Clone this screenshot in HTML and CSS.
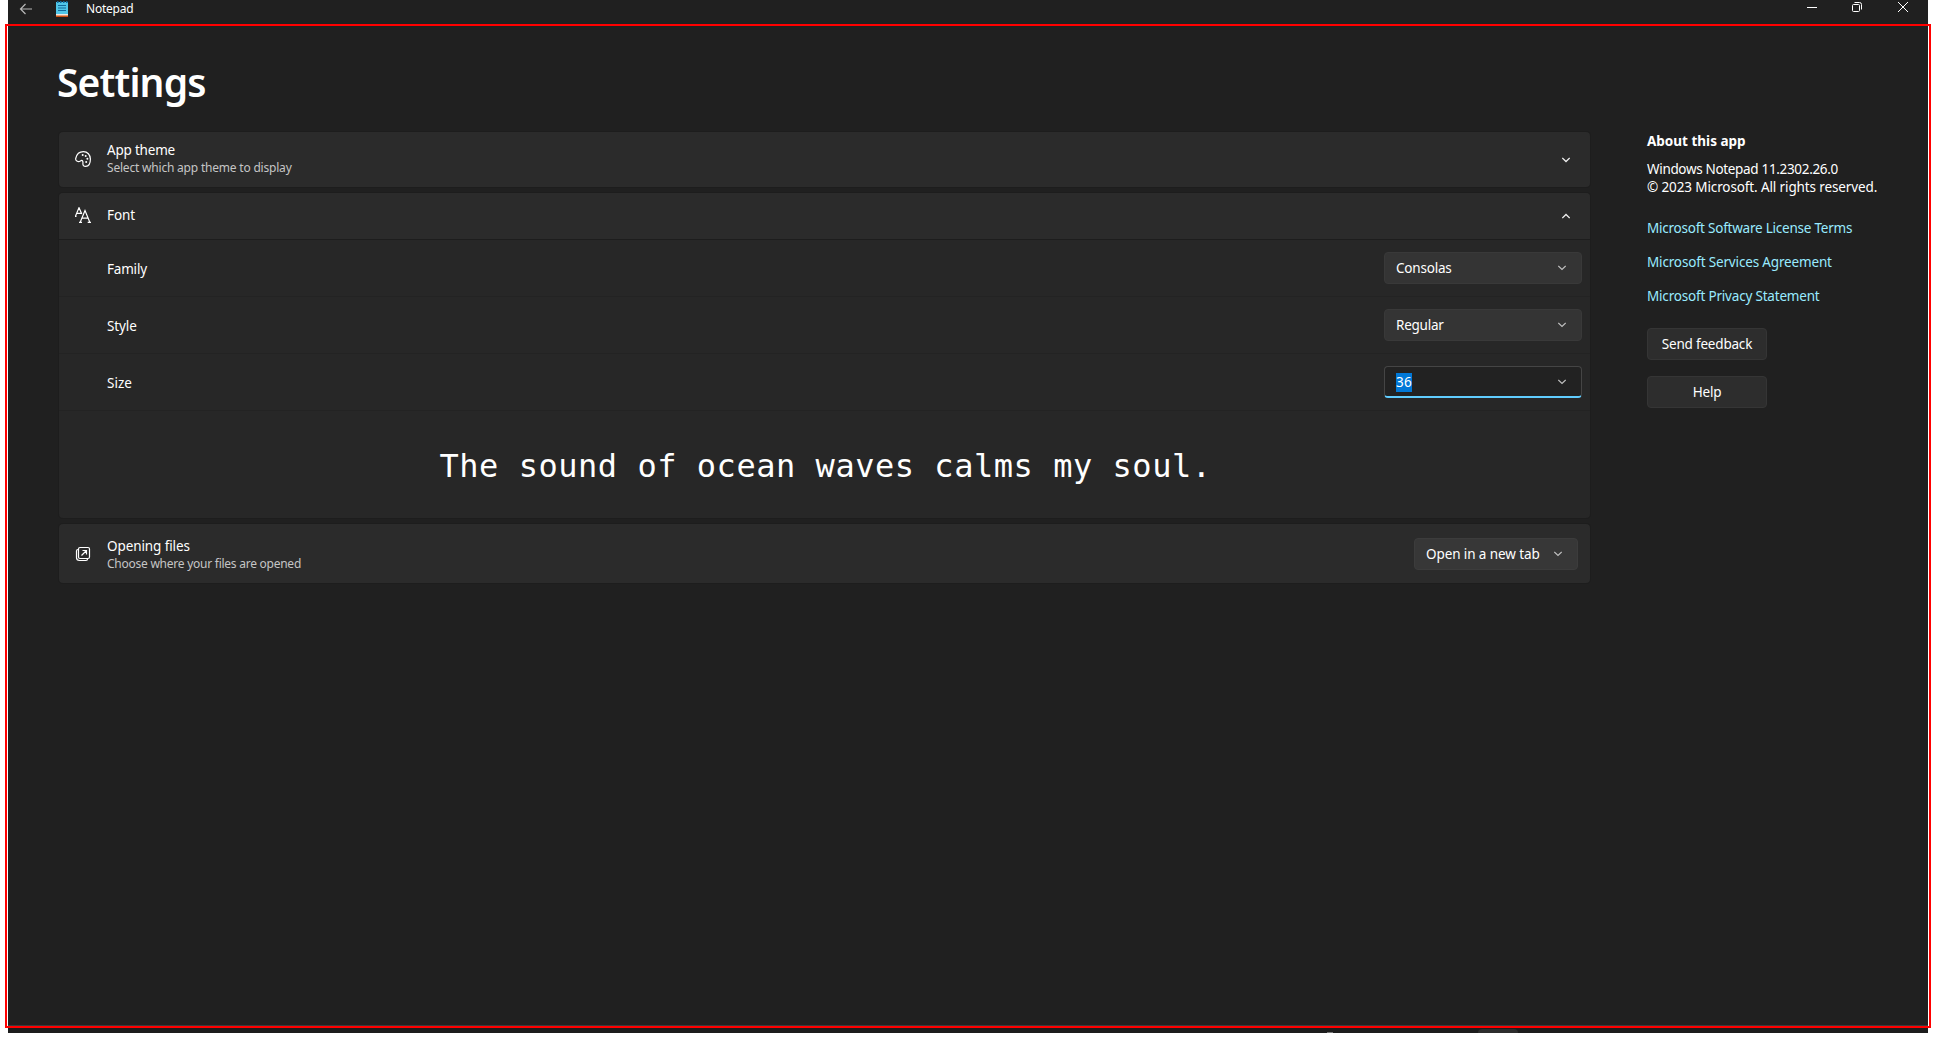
FILE: index.html
```html
<!DOCTYPE html>
<html lang="en">
<head>
<meta charset="utf-8">
<title>Notepad</title>
<link rel="stylesheet" href="styles.css">
</head>
<body>
<div class="window">
  <header class="titlebar">
    <svg class="back" width="14" height="14" viewBox="0 0 14 14"><path d="M13 7H1.500M6.500 2 1.500 7l5 5"/></svg>
    <svg class="logo" width="12" height="18" viewBox="0 0 12 18"><path fill="#ca5010" d="M0 14h12v3H0z"/><path fill="#f3e9e0" d="M0 13h12v2.500H0z"/><path fill="#50c6e8" d="M0 2h12v12H0z"/><path fill="#126a9c" d="M1 1h1.500v2H1zM4 1h1.500v2H4zM7 1h1.500v2H7zM10 1h1.500v2H10zM2 5h8v1H2zM2 7.500h8v1H2zM2 10h8v1H2z"/></svg>
    <span class="app-name">Notepad</span>
    <div class="caption">
      <svg width="10" height="14" viewBox="0 0 10 14"><path d="M0 7.500h10"/></svg>
      <svg width="10" height="14" viewBox="0 0 10 14"><rect x=".5" y="4.500" width="7" height="7" rx="1"/><path d="M2.500 2.500h5a2 2 0 0 1 2 2v5"/></svg>
      <svg class="close" width="10" height="14" viewBox="0 0 10 14"><path d="m0 2 10 10M10 2 0 12"/></svg>
    </div>
  </header>
  <main class="page">
    <section class="settings">
      <h1>Settings</h1>
      <div class="card theme">
        <svg class="icon" width="16" height="16" viewBox="0 0 16 16"><path d="M.7 7.500C1.600 3.300 4.500.6 8.400.6c4 0 7 3.200 7 7.500 0 4.500-2 7.300-4.700 7.300-2.100 0-3-1.300-2.800-3.200.2-1.700-.2-2.800-1.300-2.800-1 0-1.500 1.200-3.100 1.200C1.700 10.600.4 9.200.7 7.500z"/><g class="dots"><circle cx="7.700" cy="4" r="1"/><circle cx="10.700" cy="5" r="1"/><circle cx="12.400" cy="7.800" r="1"/><circle cx="11.200" cy="10.900" r="1"/></g></svg>
        <div class="label"><span class="name t-theme">App theme</span><span class="desc t-select">Select which app theme to display</span></div>
        <svg class="chevron" width="8" height="6" viewBox="0 0 8 6"><path d="m.3 1 3.700 3.500L7.700 1"/></svg>
      </div>
      <div class="group">
        <div class="row head">
          <svg class="icon" width="16" height="16" viewBox="0 0 16 16"><path d="M.5 9 4 .7 6.800 7M1.800 6.300H6M0 9.300h1.500M5.300 15 10 3.500 14.700 15M6.800 11.200h6.400M4 15.300h3M12.700 15.300H16"/></svg>
          <span class="name t-font">Font</span>
          <svg class="chevron" width="8" height="6" viewBox="0 0 8 6"><path d="M.3 5 4 1.500 7.700 5"/></svg>
        </div>
        <div class="row sub"><span class="name t-family">Family</span><div class="combo"><span class="t-consolas">Consolas</span><svg class="chevron dim" width="8" height="6" viewBox="0 0 8 6"><path d="m.3 1 3.700 3.500L7.700 1"/></svg></div></div>
        <div class="row sub"><span class="name t-style">Style</span><div class="combo"><span class="t-regular">Regular</span><svg class="chevron dim" width="8" height="6" viewBox="0 0 8 6"><path d="m.3 1 3.700 3.500L7.700 1"/></svg></div></div>
        <div class="row sub"><span class="name t-size">Size</span><div class="combo edit"><span class="selected">36</span><svg class="chevron dim" width="8" height="6" viewBox="0 0 8 6"><path d="m.3 1 3.700 3.500L7.700 1"/></svg></div></div>
        <div class="preview">The sound of ocean waves calms my soul.</div>
      </div>
      <div class="card files">
        <svg class="icon" width="16" height="16" viewBox="0 0 16 16"><rect x="3.500" y="1.500" width="11" height="11" rx="1.500"/><path d="M3 3.500c-1 0-1.500.6-1.500 1.500v6.500a3 3 0 0 0 3 3H11c.9 0 1.500-.5 1.500-1.500M6.500 9.500l5-5M7.500 4.500h4v4"/></svg>
        <div class="label"><span class="name t-opening">Opening files</span><span class="desc t-choose">Choose where your files are opened</span></div>
        <div class="combo tab"><span class="t-tab">Open in a new tab</span><svg class="chevron dim" width="8" height="6" viewBox="0 0 8 6"><path d="m.3 1 3.700 3.500L7.700 1"/></svg></div>
      </div>
    </section>
    <aside class="about">
      <h2>About this app</h2>
      <p><span class="t-version">Windows Notepad 11.2302.26.0</span><br><span class="t-rights">© 2023 Microsoft. All rights reserved.</span></p>
      <nav><a class="t-license">Microsoft Software License Terms</a><a class="t-services">Microsoft Services Agreement</a><a class="t-privacy">Microsoft Privacy Statement</a></nav>
      <button><span class="t-send">Send feedback</span></button>
      <button><span class="t-help">Help</span></button>
    </aside>
  </main>
  <footer class="taskbar"><i class="speck"></i><i class="task"></i></footer>
</div>
<div class="frame"></div>
</body>
</html>
```
FILE: styles.css
```css
* { box-sizing: border-box; }
body { margin: 0; background: #fff; color: #fff; font: 13.5px/18px "Noto Sans", sans-serif; }
span, a { white-space: nowrap; }
svg { display: block; flex: none; fill: none; stroke: #fff; stroke-width: 1; }
.window { display: flex; flex-direction: column; width: 1920px; height: 1033px; margin-left: 8px; background: #202020; }

.titlebar { display: flex; align-items: flex-start; height: 24px; padding-left: 11px; }
.back { margin-top: 2px; stroke: #b8b8b8; stroke-width: 1.2; }
.logo { margin-left: 23px; stroke: none; }
.app-name { margin-left: 18px; font-size: 12px; letter-spacing: -.22px; }
.caption { display: flex; gap: 35px; margin: 0 20px 0 auto; }
.close { margin-left: 1px; }

.page { display: flex; flex: 1; padding-left: 51px; }
.settings { width: 1531px; }
h1 { height: 108px; margin: 0; padding: 31px 0 0 0; font-size: 39px; line-height: 54px; font-weight: 600; letter-spacing: -.87px; text-indent: -2px; }
.card, .row { display: flex; align-items: center; }
.card { padding: 0 20px 0 16px; border-radius: 4px; background: #2b2b2b; box-shadow: 0 0 0 1px #1d1d1d; }
.theme { height: 55px; }
.icon { stroke-width: 1.2; }
.theme .icon, .head .icon { margin-bottom: 2px; }
.label { display: flex; flex-direction: column; margin-left: 32px; }
.card .label, .head .name { margin-left: 16px; }
.theme .label, .head .name { padding-bottom: 2px; }
.files .label { padding-top: 2px; }
.desc { color: #c5c5c5; font-size: 12px; line-height: 17px; }
.chevron { margin-left: auto; stroke: #f0f0f0; stroke-width: 1.3; }
.dim { stroke: #c0c0c0; stroke-width: 1.2; }
.dots circle { fill: #fff; stroke: none; }

.group { margin: 6px 0; border-radius: 4px; overflow: hidden; background: #272727; box-shadow: 0 0 0 1px #1d1d1d; }
.head { height: 47px; padding: 0 20px 0 16px; border-bottom: 1px solid #1d1d1d; background: #2b2b2b; }
.sub { height: 57px; padding: 0 8px 0 48px; border-bottom: 1px solid #232323; }
.sub .name { padding-top: 2px; }
.combo { display: flex; align-items: center; width: 198px; height: 32px; margin-left: auto; padding: 0 15px 0 11px; border: 1px solid #393939; border-radius: 4px; background: #343434; }
.edit { border-color: #454545; border-bottom: 2px solid #60cdff; background: #222; }
.selected { height: 19px; margin-top: 1px; background: #0078d7; letter-spacing: .2px; }
.preview { height: 107px; padding: 33px 0 0 2px; text-align: center; white-space: pre; font: 32px/44px "DejaVu Sans Mono", monospace; letter-spacing: .53px; }
.files { height: 59px; padding-right: 12px; }
.tab { width: 164px; border-color: #3c3c3c; background: #373737; }

.about { width: 260px; margin-left: 57px; padding-top: 107px; }
h2 { margin: 0; font-size: 13.5px; line-height: 20px; font-weight: 700; }
p { margin: 9px 0 0; }
nav { display: flex; flex-direction: column; gap: 16px; margin: 23px 0 23px; color: #99ebff; }
button { display: block; width: 120px; height: 32px; margin: 0 0 16px; padding: 0; border: 1px solid #353535; border-radius: 4px; background: #2d2d2d; color: #fff; font: inherit; }

/* Per-label tracking */
.t-theme, .t-select, .t-family, .t-consolas, .t-send, .t-help { letter-spacing: -.2px; }
.t-font, .t-style, .t-opening, .t-tab { letter-spacing: -.1px; }
.t-regular, .t-choose { letter-spacing: -.25px; }
.t-version { letter-spacing: -.33px; }
.t-rights { letter-spacing: -.12px; }
.t-license { letter-spacing: -.23px; }
.t-services { letter-spacing: -.16px; }
.t-privacy { letter-spacing: -.19px; }

.taskbar { display: flex; height: 8px; border-top: 1px solid #3a3a3a; background: #1c1c1c; }
.speck { width: 6px; height: 1px; margin: 6px 0 0 1319px; background: #777; }
.task { width: 40px; height: 4px; margin: 3px 0 0 145px; border-radius: 4px 4px 0 0; background: #2d2d2d; }
.frame { position: absolute; left: 5px; top: 24px; width: 1926px; height: 1004px; border: 2px solid #f00; }
```
